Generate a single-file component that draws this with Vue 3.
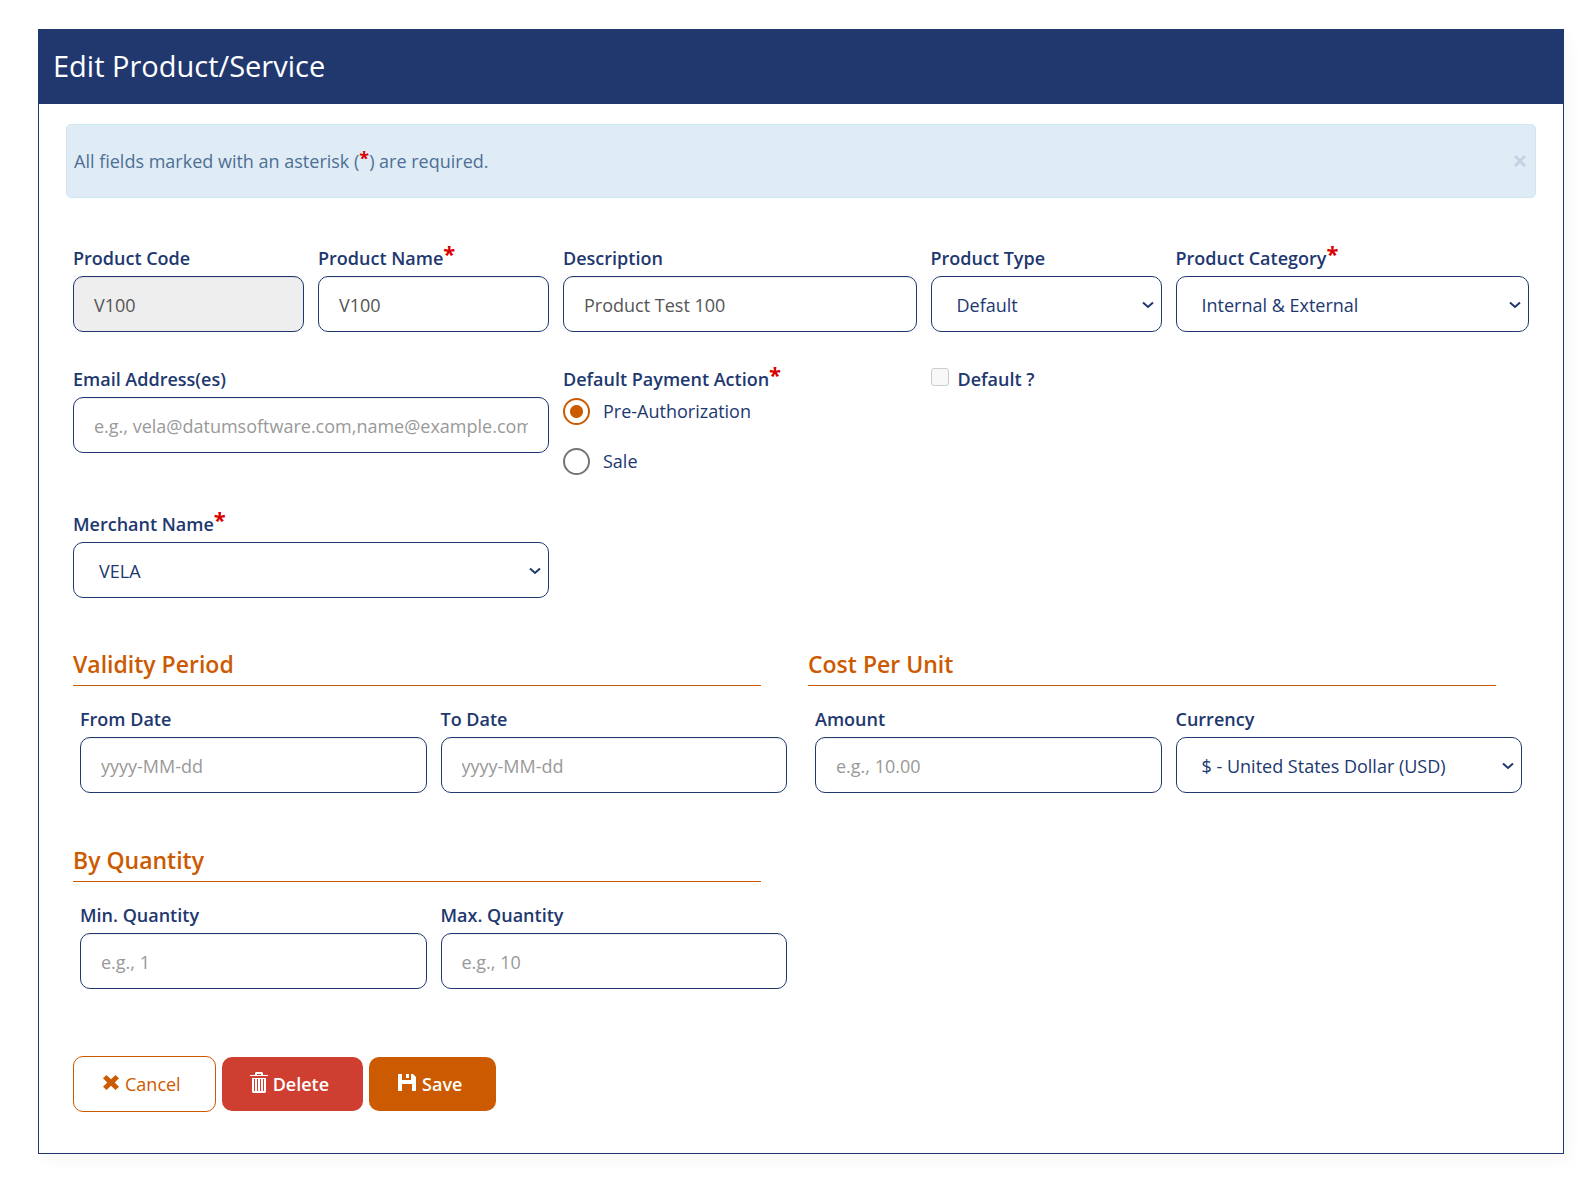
<script setup>
import { reactive, ref } from 'vue'

const form = reactive({
  code: 'V100',
  name: 'V100',
  description: 'Product Test 100',
  type: 'Default',
  category: 'Internal & External',
  email: '',
  action: 'preauth',
  isDefault: false,
  merchant: 'VELA',
  from: '',
  to: '',
  amount: '',
  currency: 'USD',
  min: '',
  max: '',
})
const noticeOpen = ref(true)
</script>

<template>
  <main class="page">
    <section class="panel">
      <header class="panel-head">
        <h1>Edit Product/Service</h1>
      </header>

      <form class="panel-body" @submit.prevent>
        <div v-if="noticeOpen" class="notice">
          <p>All fields marked with an asterisk (<span class="req">*</span>) are required.</p>
          <button type="button" class="close" aria-label="Close" @click="noticeOpen = false">
            <svg viewBox="0 0 14 14" width="14" height="14"><path d="M2 2l10 10M12 2L2 12" /></svg>
          </button>
        </div>

        <div class="grid first">
          <div class="field c2">
            <label for="code">Product Code</label>
            <input id="code" v-model="form.code" class="control" type="text" disabled />
          </div>
          <div class="field c2">
            <label for="name">Product Name<span class="req">*</span></label>
            <input id="name" v-model="form.name" class="control" type="text" />
          </div>
          <div class="field c3">
            <label for="description">Description</label>
            <input id="description" v-model="form.description" class="control" type="text" />
          </div>
          <div class="field c2">
            <label for="type">Product Type</label>
            <div class="select">
              <select id="type" v-model="form.type" class="control">
                <option>Default</option>
              </select>
              <svg class="chevron" viewBox="0 0 12 8" width="12" height="8"><path d="M1 1.5l5 4.500 5-4.500" /></svg>
            </div>
          </div>
          <div class="field c3">
            <label for="category">Product Category<span class="req">*</span></label>
            <div class="select">
              <select id="category" v-model="form.category" class="control">
                <option>Internal &amp; External</option>
              </select>
              <svg class="chevron" viewBox="0 0 12 8" width="12" height="8"><path d="M1 1.5l5 4.500 5-4.500" /></svg>
            </div>
          </div>
        </div>

        <div class="grid second">
          <div class="field c4">
            <label for="email">Email Address(es)</label>
            <input
              id="email"
              v-model="form.email"
              class="control"
              type="text"
              placeholder="e.g., vela@datumsoftware.com,name@example.com"
            />
          </div>
          <fieldset class="c3">
            <legend>Default Payment Action<span class="req">*</span></legend>
            <label class="radio">
              <input v-model="form.action" type="radio" name="action" value="preauth" />
              Pre-Authorization
            </label>
            <label class="radio">
              <input v-model="form.action" type="radio" name="action" value="sale" />
              Sale
            </label>
          </fieldset>
          <label class="check c3">
            <input v-model="form.isDefault" type="checkbox" disabled />
            Default ?
          </label>
        </div>

        <div class="grid third">
          <div class="field c4">
            <label for="merchant">Merchant Name<span class="req">*</span></label>
            <div class="select">
              <select id="merchant" v-model="form.merchant" class="control">
                <option>VELA</option>
              </select>
              <svg class="chevron" viewBox="0 0 12 8" width="12" height="8"><path d="M1 1.5l5 4.500 5-4.500" /></svg>
            </div>
          </div>
        </div>

        <div class="sections">
          <section class="group">
            <h2>Validity Period</h2>
            <div class="pair">
              <div class="field">
                <label for="from">From Date</label>
                <input id="from" v-model="form.from" class="control" type="text" placeholder="yyyy-MM-dd" />
              </div>
              <div class="field">
                <label for="to">To Date</label>
                <input id="to" v-model="form.to" class="control" type="text" placeholder="yyyy-MM-dd" />
              </div>
            </div>
          </section>

          <section class="group">
            <h2>Cost Per Unit</h2>
            <div class="pair">
              <div class="field">
                <label for="amount">Amount</label>
                <input id="amount" v-model="form.amount" class="control" type="text" placeholder="e.g., 10.00" />
              </div>
              <div class="field">
                <label for="currency">Currency</label>
                <div class="select">
                  <select id="currency" v-model="form.currency" class="control">
                    <option value="USD">$ - United States Dollar (USD)</option>
                  </select>
                  <svg class="chevron" viewBox="0 0 12 8" width="12" height="8"><path d="M1 1.5l5 4.500 5-4.500" /></svg>
                </div>
              </div>
            </div>
          </section>

          <section class="group">
            <h2>By Quantity</h2>
            <div class="pair">
              <div class="field">
                <label for="min">Min. Quantity</label>
                <input id="min" v-model="form.min" class="control" type="text" placeholder="e.g., 1" />
              </div>
              <div class="field">
                <label for="max">Max. Quantity</label>
                <input id="max" v-model="form.max" class="control" type="text" placeholder="e.g., 10" />
              </div>
            </div>
          </section>
        </div>

        <div class="actions">
          <button type="button" class="btn cancel">
            <svg viewBox="0 0 18 24" width="18" height="24">
              <path d="M4.5 3L9 7.2 13.5 3 17 6.3 12.7 10.500 17 14.7 13.5 18 9 13.8 4.5 18 1 14.7 5.3 10.500 1 6.3z" />
            </svg>
            Cancel
          </button>
          <button type="button" class="btn delete">
            <svg viewBox="0 0 18 24" width="18" height="24">
              <path fill-rule="evenodd" d="M0 3h5V1l1-1h6l1 1v2h5v1H0zM7 3h4V2H7zM2 6h14v14l-1 1H3l-1-1zM4 7v12h1V7zM7 7v12h1V7zM10 7v12h1V7zM13 7v12h1V7z" />
            </svg>
            Delete
          </button>
          <button type="submit" class="btn save">
            <svg viewBox="0 0 20 24" width="20" height="24">
              <path fill-rule="evenodd" d="M1 2h4v6h9V2h2l3 3v14h-4v-7H5v7H1zM9 2h3v4H9z" />
            </svg>
            Save
          </button>
        </div>
      </form>
    </section>
  </main>
</template>

<style>
body {
  margin: 0;
  background: #fff;
}
</style>

<style scoped>
.page {
  --navy: #21386f;
  --orange: #cc5a00;
  padding: 29px 25px 30px 38px;
  font: 18px/24px "Open Sans", "Noto Sans", sans-serif;
  color: var(--navy);
}
.page * {
  box-sizing: border-box;
}
.panel {
  border: 1px solid var(--navy);
  background: #fff;
  box-shadow: 4px 6px 16px rgba(0, 0, 0, 0.04);
}
.panel-head {
  padding: 16px 14px 18px;
  background: var(--navy);
  color: #fff;
}
h1 {
  margin: 0;
  font-size: 29px;
  line-height: 40px;
  font-weight: 400;
}
.panel-body {
  padding: 20px 27px 41px;
}
.notice {
  display: flex;
  align-items: center;
  justify-content: space-between;
  height: 74px;
  padding: 0 8px 0 7px;
  border: 1px solid #cde8f2;
  border-radius: 5px;
  background: #dfecf6;
  color: #4e6f95;
}
.notice p {
  margin: 0;
}
.notice .req {
  font-size: 18px;
}
.close {
  display: flex;
  padding: 0;
  border: 0;
  background: none;
}
.close path {
  fill: none;
  stroke: #c2d3e5;
  stroke-width: 3;
}
.req {
  color: #d80000;
  font-size: 22px;
  font-weight: 700;
  line-height: 0;
  vertical-align: 3px;
}
.grid {
  display: grid;
  grid-template-columns: repeat(12, 1fr);
  align-items: start;
  gap: 0 14px;
  padding: 0 7px;
}
.c2 {
  grid-column: span 2;
}
.c3 {
  grid-column: span 3;
}
.c4 {
  grid-column: span 4;
}
.first {
  margin-top: 48px;
}
.second {
  margin-top: 35px;
}
.third {
  margin-top: 37px;
}
.field > label,
legend {
  display: block;
  height: 30px;
  padding: 0;
  line-height: 24px;
  font-weight: 600;
  white-space: nowrap;
}
.control {
  display: block;
  width: 100%;
  height: 56px;
  margin: 0;
  padding: 2px 20px 0;
  border: 1px solid var(--navy);
  border-radius: 10px;
  background: #fff;
  box-shadow: inset 0 1px 1px rgba(0, 0, 0, 0.07);
  color: #555;
  font: inherit;
  line-height: 24px;
}
.control::placeholder {
  color: #999;
  opacity: 1;
}
.control:disabled {
  background: #eee;
}
.select {
  position: relative;
}
select.control {
  padding: 2px 25px 0;
  appearance: none;
  box-shadow: none;
  color: var(--navy);
}
.chevron {
  position: absolute;
  top: 25px;
  right: 8px;
  fill: none;
  stroke: var(--navy);
  stroke-width: 2;
  pointer-events: none;
}
fieldset {
  display: grid;
  gap: 22px;
  min-width: 0;
  margin: 0;
  padding: 0;
  border: 0;
}
.radio {
  display: flex;
  align-items: center;
  gap: 13px;
  height: 28px;
}
.radio input {
  flex: none;
  width: 27px;
  height: 27px;
  margin: 0;
  appearance: none;
  border: 2px solid #757575;
  border-radius: 50%;
  background: #fff;
}
.radio input:checked {
  border-color: var(--orange);
  background: radial-gradient(circle, var(--orange) 6px, #fff 7px);
}
.check {
  display: flex;
  align-items: flex-start;
  gap: 9px;
  font-weight: 600;
}
.check input {
  width: 18px;
  height: 18px;
  margin: 1px 0 0;
  appearance: none;
  border: 1px solid #ccc;
  border-radius: 3px;
  background: #f8f8f8;
}
.sections {
  display: grid;
  grid-template-columns: 1fr 1fr;
  gap: 52px 14px;
  margin-top: 51px;
  padding: 0 7px;
}
h2 {
  margin: 0 33px 21px 0;
  padding-bottom: 6px;
  border-bottom: 1px solid var(--orange);
  color: var(--orange);
  font-size: 23px;
  line-height: 30px;
  font-weight: 600;
}
.pair {
  display: grid;
  grid-template-columns: 1fr 1fr;
  gap: 14px;
  padding: 0 7px;
}
.actions {
  display: flex;
  align-items: center;
  gap: 6px;
  margin-top: 67px;
  padding: 0 7px;
}
.btn {
  display: flex;
  align-items: center;
  gap: 5px;
  height: 54px;
  padding: 0 34px 0 28px;
  border: 0;
  border-radius: 10px;
  color: #fff;
  font: inherit;
  font-weight: 600;
}
.btn svg {
  fill: currentColor;
}
.cancel {
  height: 56px;
  border: 1px solid var(--orange);
  background: #fff;
  color: var(--orange);
  font-weight: 500;
}
.delete {
  background: #cf3f31;
}
.save {
  background: var(--orange);
}
</style>
